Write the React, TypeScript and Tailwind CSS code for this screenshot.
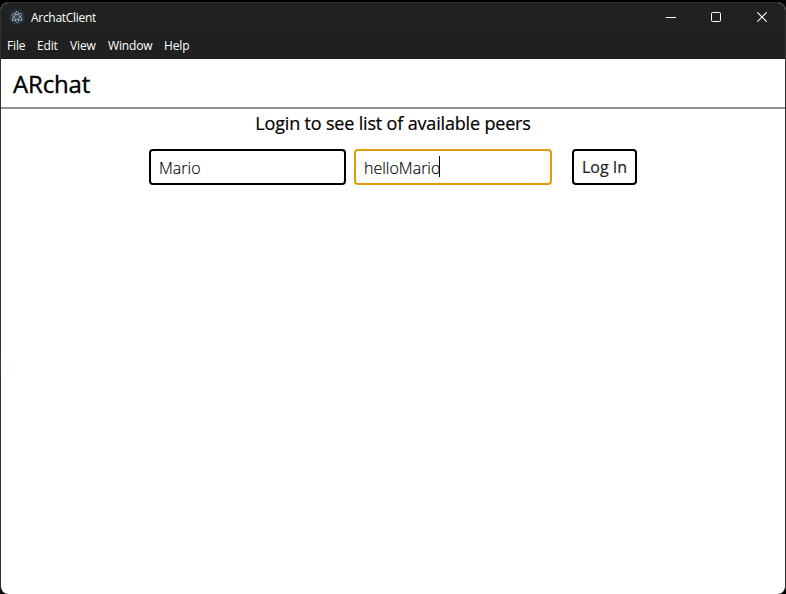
const menuItems = [
  { label: "File", width: "w-[30px]" },
  { label: "Edit", width: "w-[33px]" },
  { label: "View", width: "w-[38px]" },
  { label: "Window", width: "w-[56px]" },
  { label: "Help", width: "w-[30px]" },
];

function ElectronLogo() {
  return (
    <svg className="h-4 w-4 shrink-0" viewBox="0 0 16 16" fill="none">
      <circle cx="8" cy="8" r="8" fill="#2b2e3b" />
      <g stroke="#a5cfd9" strokeWidth="0.65" strokeDasharray="5.6 1">
        <ellipse cx="8" cy="8" rx="5.6" ry="2.2" transform="rotate(28 8 8)" />
        <ellipse cx="8" cy="8" rx="5.6" ry="2.2" transform="rotate(88 8 8)" />
        <ellipse cx="8" cy="8" rx="5.6" ry="2.2" transform="rotate(148 8 8)" />
      </g>
      <g fill="#a5cfd9">
        <circle cx="8" cy="8" r="0.5" />
        <circle cx="7.4" cy="2.8" r="0.6" />
        <circle cx="3.6" cy="11" r="0.6" />
        <circle cx="12.6" cy="10.8" r="0.6" />
      </g>
    </svg>
  );
}

function TitleBar() {
  return (
    <header className="flex h-[31px] items-start bg-[#202221] pl-2 text-white">
      <div className="flex h-7 items-center">
        <ElectronLogo />
        <span className="mt-px ml-[6px] text-[12px] leading-4 tracking-[-0.3px]">ArchatClient</span>
      </div>
      <div className="ml-auto flex">
        <button className="flex h-[30px] w-[45px] items-center justify-center pl-[2px]" aria-label="Minimize">
          <svg className="h-[11px] w-[11px]" viewBox="0 0 11 11">
            <path d="M0 4.5H10" stroke="white" />
          </svg>
        </button>
        <button className="flex h-[29px] w-[46px] items-center justify-center" aria-label="Maximize">
          <svg className="h-[11px] w-[11px]" viewBox="0 0 11 11" fill="none">
            <rect x="0.5" y="0.5" width="9" height="9" rx="1" stroke="white" />
          </svg>
        </button>
        <button className="flex h-[29px] w-[46px] items-center justify-center" aria-label="Close">
          <svg className="h-[11px] w-[11px]" viewBox="0 0 11 11">
            <path d="M0.3 0.3L9.7 9.7M9.7 0.3L0.3 9.7" stroke="white" strokeWidth="1.1" />
          </svg>
        </button>
      </div>
    </header>
  );
}

export default function App() {
  return (
    <div className="relative h-[594px] w-[786px] overflow-hidden bg-black pt-[2px] font-['Segoe_UI','Open_Sans','Noto_Sans',sans-serif]">
      <div className="flex h-[592px] flex-col overflow-hidden rounded-lg border border-b-0 border-[#303030] bg-white text-black">
        <TitleBar />
        <nav className="flex h-[25px] shrink-0 bg-[#202020] pl-[6px] text-[12px] leading-[24px] tracking-[-0.15px] whitespace-nowrap text-white">
          {menuItems.map((item) => (
            <span key={item.label} className={item.width}>
              {item.label}
            </span>
          ))}
        </nav>
        <div className="h-[50px] shrink-0 border-b-2 border-[#929292] pl-3">
          <h1 className="text-[24px] leading-[50px] tracking-[-0.15px] [-webkit-text-stroke:0.35px_black]">ARchat</h1>
        </div>
        <main>
          <h2 className="mt-px text-center text-[18px] leading-[26px] tracking-[-0.17px] whitespace-nowrap [-webkit-text-stroke:0.2px_black]">
            Login to see list of available peers
          </h2>
          <form className="mt-[13px] flex pl-[148px]" onSubmit={(e) => e.preventDefault()}>
            <div className="h-9 w-[197px] rounded border-2 border-black pl-2 text-[16px] leading-[34px] font-light [-webkit-text-stroke:0.15px_black]">Mario</div>
            <div className="ml-2 flex h-9 w-[198px] rounded border-2 border-[#e29b0b] pl-2 text-[16px] leading-[34px] font-light">
              <span className="[-webkit-text-stroke:0.15px_black]">helloMario</span>
              <span className="mt-[5px] -ml-px h-[21px] w-px bg-black" />
            </div>
            <button className="ml-5 h-9 w-[65px] rounded border-2 border-black text-center text-[16px] whitespace-nowrap text-[#1f1f1f] [-webkit-text-stroke:0.2px_#1f1f1f]">
              <span className="block pt-px leading-[31px]">Log In</span>
            </button>
          </form>
        </main>
      </div>
      <div className="absolute top-[352px] left-0 h-7 w-px bg-linear-to-b from-[#303030] via-[#1d4850] to-[#303030]" />
    </div>
  );
}
